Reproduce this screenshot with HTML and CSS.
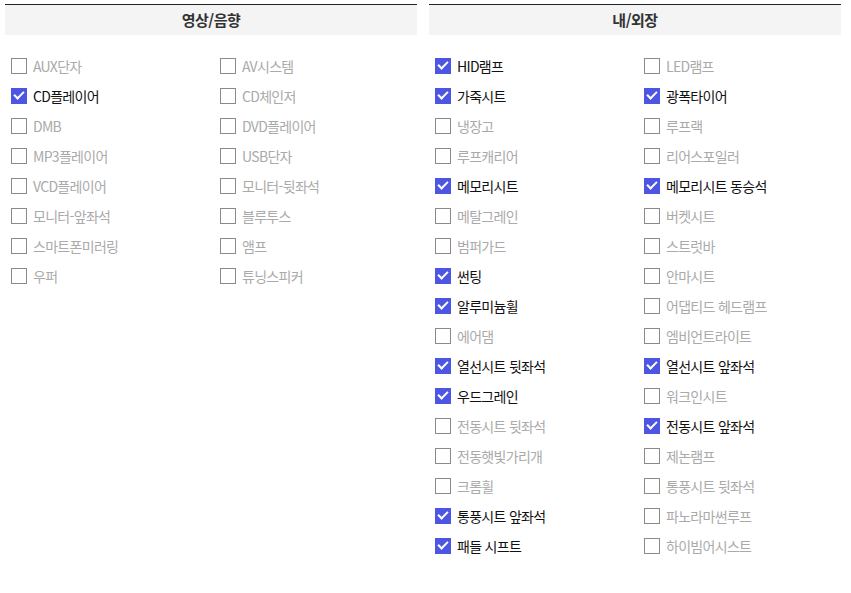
FILE: index.html
```html
<!DOCTYPE html>
<html lang="ko">
<head>
<meta charset="utf-8">
<link rel="stylesheet" href="styles.css">
</head>
<body>
<div class="wrap">
  <section class="panel">
    <div class="head">영상/음향</div>
    <ul class="list">
      <li><span class="box"></span>AUX단자</li>
      <li><span class="box"></span>AV시스템</li>
      <li class="on"><span class="box"></span>CD플레이어</li>
      <li><span class="box"></span>CD체인저</li>
      <li><span class="box"></span>DMB</li>
      <li><span class="box"></span>DVD플레이어</li>
      <li><span class="box"></span>MP3플레이어</li>
      <li><span class="box"></span>USB단자</li>
      <li><span class="box"></span>VCD플레이어</li>
      <li><span class="box"></span>모니터-뒷좌석</li>
      <li><span class="box"></span>모니터-앞좌석</li>
      <li><span class="box"></span>블루투스</li>
      <li><span class="box"></span>스마트폰미러링</li>
      <li><span class="box"></span>앰프</li>
      <li><span class="box"></span>우퍼</li>
      <li><span class="box"></span>튜닝스피커</li>
    </ul>
  </section>
  <section class="panel">
    <div class="head">내/외장</div>
    <ul class="list">
      <li class="on"><span class="box"></span>HID램프</li>
      <li><span class="box"></span>LED램프</li>
      <li class="on"><span class="box"></span>가죽시트</li>
      <li class="on"><span class="box"></span>광폭타이어</li>
      <li><span class="box"></span>냉장고</li>
      <li><span class="box"></span>루프랙</li>
      <li><span class="box"></span>루프캐리어</li>
      <li><span class="box"></span>리어스포일러</li>
      <li class="on"><span class="box"></span>메모리시트</li>
      <li class="on"><span class="box"></span>메모리시트 동승석</li>
      <li><span class="box"></span>메탈그레인</li>
      <li><span class="box"></span>버켓시트</li>
      <li><span class="box"></span>범퍼가드</li>
      <li><span class="box"></span>스트럿바</li>
      <li class="on"><span class="box"></span>썬팅</li>
      <li><span class="box"></span>안마시트</li>
      <li class="on"><span class="box"></span>알루미늄휠</li>
      <li><span class="box"></span>어댑티드 헤드램프</li>
      <li><span class="box"></span>에어댐</li>
      <li><span class="box"></span>엠비언트라이트</li>
      <li class="on"><span class="box"></span>열선시트 뒷좌석</li>
      <li class="on"><span class="box"></span>열선시트 앞좌석</li>
      <li class="on"><span class="box"></span>우드그레인</li>
      <li><span class="box"></span>워크인시트</li>
      <li><span class="box"></span>전동시트 뒷좌석</li>
      <li class="on"><span class="box"></span>전동시트 앞좌석</li>
      <li><span class="box"></span>전동햇빛가리개</li>
      <li><span class="box"></span>제논램프</li>
      <li><span class="box"></span>크롬휠</li>
      <li><span class="box"></span>통풍시트 뒷좌석</li>
      <li class="on"><span class="box"></span>통풍시트 앞좌석</li>
      <li><span class="box"></span>파노라마썬루프</li>
      <li class="on"><span class="box"></span>패들 시프트</li>
      <li><span class="box"></span>하이빔어시스트</li>
    </ul>
  </section>
</div>
</body>
</html>
```

FILE: styles.css
```css
html, body {
  margin: 0;
  padding: 0;
  background: #fff;
}
body {
  font-family: "Noto Sans CJK KR", "Noto Sans", sans-serif;
}
.wrap {
  display: flex;
  gap: 12px;
  padding: 4px 10px 0 5px;
}
.panel {
  width: 412px;
}
.head {
  border-top: 1px solid #222;
  background: #f4f4f4;
  height: 30px;
  line-height: 29px;
  text-align: center;
  font-size: 15px;
  font-weight: bold;
  color: #333;
  letter-spacing: -0.5px;
}
.list {
  list-style: none;
  margin: 16px 0 0 0;
  padding: 0 0 0 6px;
  display: grid;
  grid-template-columns: 209px 197px;
}
.list li {
  height: 30px;
  display: flex;
  align-items: center;
  font-size: 14px;
  letter-spacing: -0.7px;
  color: #aaa;
  white-space: nowrap;
}
.list li.on {
  color: #111;
}
.box {
  width: 14px;
  height: 14px;
  border: 1px solid #8a8a8a;
  background: #fff;
  margin-right: 6px;
  flex: none;
  position: relative;
}
.on .box {
  border-color: #4d56e2;
  background: #4d56e2;
}
.on .box::after {
  content: "";
  position: absolute;
  left: 2px;
  top: 2px;
  width: 8px;
  height: 4px;
  border-left: 2px solid #fff;
  border-bottom: 2px solid #fff;
  transform: rotate(-45deg);
  transform-origin: center;
}
```
